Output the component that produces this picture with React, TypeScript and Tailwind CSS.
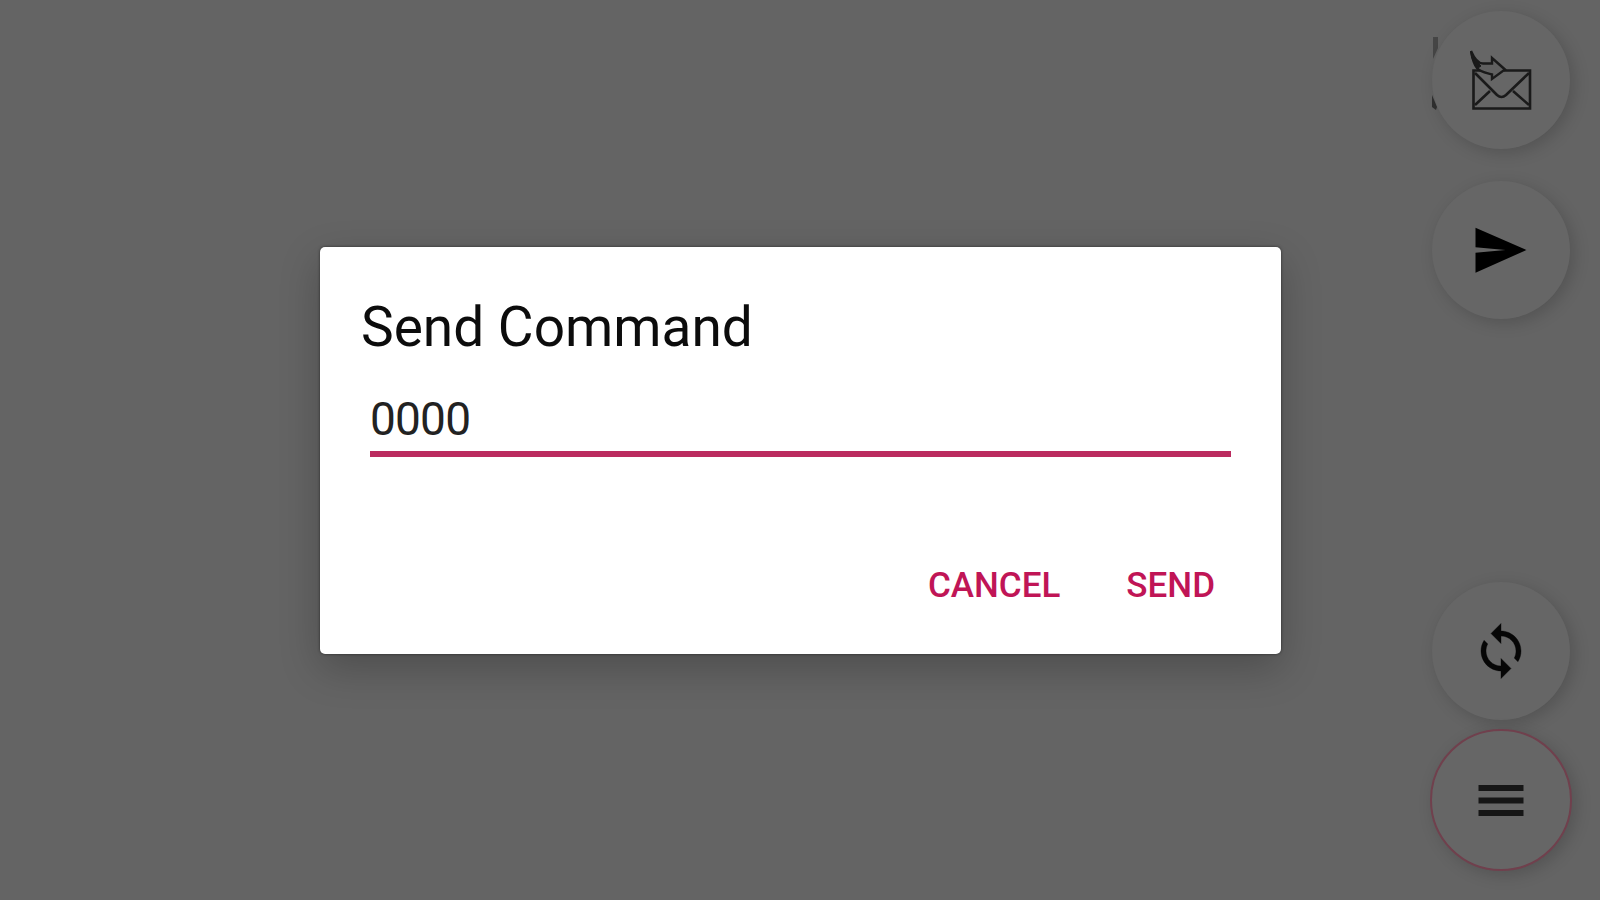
import { FormEvent, ReactNode, useState } from 'react'
import { clsx } from 'clsx'

interface RoundButtonProps {
  label: string
  className?: string
  children: ReactNode
}

function RoundButton({ label, className, children }: RoundButtonProps) {
  return (
    <button
      type="button"
      aria-label={label}
      className={clsx(
        'relative flex shrink-0 items-center justify-center rounded-full bg-[#666666] shadow-[4px_4px_16px_rgba(0,0,0,0.17)]',
        className,
      )}
    >
      {children}
    </button>
  )
}

function ForwardMailIcon() {
  return (
    <svg width="62" height="62" viewBox="0 0 62 62" fill="none" stroke="#1a1a1a" strokeWidth="2.6">
      <path d="M34 21.5H60V59.5H3.5V21.5H12" />
      <path d="M5 24L27 46Q31.5 50 36 46L59 24M5 56L20 42M59 56L43 42" />
      <path
        d="M1 2C4 9 8 14.500 13 14.500H22V9L35 20.5L22 30V25.5C17 24 10 23 7 19C3 14 2 8 1 2Z"
        fill="#606060"
        strokeWidth="2.4"
      />
      <path d="M1 2C1 8 3 13 8 19L11 17L6 12Z" fill="#1a1a1a" strokeWidth="1" />
    </svg>
  )
}

function SendIcon() {
  return (
    <svg className="-ml-[2px]" width="60" height="60" viewBox="0 0 24 24" fill="#000000">
      <path d="M2.2 21.1L22.6 12 2.2 3.1v7.8l12 1.1-12 1.1z" />
    </svg>
  )
}

function SyncIcon() {
  return (
    <svg width="60" height="60" viewBox="0 0 24 24" fill="#060606" stroke="#060606" strokeWidth="0.15">
      <path d="M12 4V1L8 5l4 4V6c3.31 0 6 2.69 6 6 0 1.01-.25 1.97-.7 2.8l1.46 1.46C19.54 15.03 20 13.57 20 12c0-4.42-3.58-8-8-8zm0 14c-3.31 0-6-2.69-6-6 0-1.01.25-1.97.7-2.8L5.24 7.74C4.46 8.97 4 10.43 4 12c0 4.42 3.58 8 8 8v3l4-4-4-4v3z" />
    </svg>
  )
}

function MenuIcon() {
  return (
    <svg className="mt-[2px]" width="60" height="60" viewBox="0 0 24 24" fill="#161616">
      <path d="M3 18h18v-2.4H3V18zm0-5h18v-2.4H3V13zm0-7.4V8h18V5.6H3z" />
    </svg>
  )
}

function SideActions() {
  return (
    <aside className="relative flex h-full w-[199px] flex-col items-center pt-[11px]">
      {/* ends of a label hidden behind the first button */}
      <svg className="absolute left-[28px] top-[34px]" width="12" height="78" viewBox="0 0 12 78">
        <path d="M4 3H9V14L4 25Z" fill="#464646" />
        <path d="M3 61L8 73L7 76L3 73Z" fill="#303030" />
      </svg>
      <RoundButton label="Forward message" className="size-[138px]">
        <ForwardMailIcon />
      </RoundButton>
      <RoundButton label="Send" className="mt-8 size-[138px]">
        <SendIcon />
      </RoundButton>
      <RoundButton label="Refresh" className="mt-[263px] size-[138px]">
        <SyncIcon />
      </RoundButton>
      <RoundButton label="Menu" className="mt-[9px] size-[142px] border-2 border-[#70404d]">
        <MenuIcon />
      </RoundButton>
    </aside>
  )
}

function CommandDialog() {
  const [command, setCommand] = useState('0000')

  const handleSubmit = (e: FormEvent<HTMLFormElement>) => {
    e.preventDefault()
  }

  return (
    <form
      onSubmit={handleSubmit}
      className="flex h-[407px] w-[961px] flex-col rounded-[5px] bg-white pl-[41px] pr-[42px] pt-12 shadow-[0_0_3px_rgba(0,0,0,0.55),0_14px_40px_rgba(0,0,0,0.23)]"
    >
      <h1 className="text-[55px] leading-[64px] text-[#0c0c0c]">Send Command</h1>
      <input
        type="text"
        aria-label="Command"
        value={command}
        onChange={(e) => setCommand(e.currentTarget.value)}
        className="ml-[9px] mt-[26px] h-[72px] w-[861px] border-b-[6px] border-[#bb2b5f] pt-[2px] text-[46px] leading-[58px] tracking-[-0.8px] text-[#222222] outline-none"
      />
      <div className="mt-[101px] flex justify-end gap-[66px] pr-[24px] text-[35px] font-medium leading-[56px] text-[#c01556]">
        <button type="button">CANCEL</button>
        <button type="submit">SEND</button>
      </div>
    </form>
  )
}

export default function App() {
  return (
    <div className="relative flex h-screen w-screen justify-end overflow-hidden bg-[#646464] font-[Roboto,sans-serif]">
      <SideActions />
      <div className="absolute inset-0 flex items-center justify-center pl-px">
        <CommandDialog />
      </div>
    </div>
  )
}
